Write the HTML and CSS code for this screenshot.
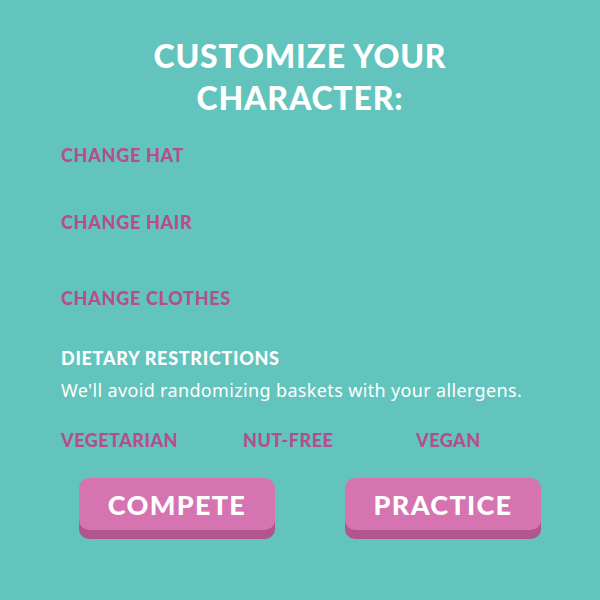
FILE: index.html
```html
<!DOCTYPE html>
<html>
<head>
<meta charset="utf-8">
<link rel="stylesheet" href="styles.css">
</head>
<body>
<main class="screen">
  <h1 class="title">CUSTOMIZE YOUR<br>CHARACTER:</h1>
  <section class="options">
    <div class="opt opt-hat">CHANGE HAT</div>
    <div class="opt opt-hair">CHANGE HAIR</div>
    <div class="opt opt-clothes">CHANGE CLOTHES</div>
  </section>
  <section class="diet">
    <h2 class="diet-title">DIETARY RESTRICTIONS</h2>
    <p class="diet-desc">We'll avoid randomizing baskets with your allergens.</p>
    <div class="diet-row">
      <span class="diet-item d1">VEGETARIAN</span>
      <span class="diet-item d2">NUT-FREE</span>
      <span class="diet-item d3">VEGAN</span>
    </div>
  </section>
  <div class="buttons">
    <button class="btn btn-compete">COMPETE</button>
    <button class="btn btn-practice">PRACTICE</button>
  </div>
</main>
</body>
</html>
```
FILE: styles.css
```css
html, body {
  margin: 0;
  padding: 0;
  background: #62c4bc;
}
.screen {
  width: 600px;
  height: 600px;
  box-sizing: border-box;
  padding-top: 35px;
  font-family: Lato, "Open Sans", sans-serif;
}
.title {
  margin: 0;
  text-align: center;
  color: #ffffff;
  font-size: 32px;
  font-weight: 900;
  line-height: 42px;
  letter-spacing: 0.8px;
}
.options {
  padding-left: 61px;
  margin-top: 25px;
}
.opt {
  color: #b44f8f;
  font-weight: 900;
  font-size: 18px;
  line-height: 22px;
  letter-spacing: 0.7px;
}
.opt-hair { margin-top: 45px; }
.opt-clothes { margin-top: 54px; }
.diet {
  padding-left: 61px;
}
.diet-title {
  margin: 38px 0 0;
  color: #ffffff;
  font-size: 18px;
  font-weight: 900;
  line-height: 22px;
  letter-spacing: 0.7px;
}
.diet-desc {
  margin: 9px 0 0;
  color: #ffffff;
  font-size: 18px;
  line-height: 24px;
  font-family: "Noto Sans", sans-serif;
  font-weight: 400;
  letter-spacing: 0.35px;
}
.diet-row {
  display: flex;
  margin-top: 27px;
}
.diet-item {
  color: #b44f8f;
  font-weight: 900;
  font-size: 18px;
  line-height: 22px;
  letter-spacing: 0.5px;
}
.d1 { width: 182px; }
.d2 { width: 173px; }
.buttons {
  display: flex;
  gap: 70px;
  padding-left: 79px;
  margin-top: 27px;
}
.btn {
  width: 196px;
  height: 61px;
  border: 0;
  border-radius: 10px;
  background: #d574b0;
  box-shadow: inset 0 -9px 0 #b15591;
  color: #ffffff;
  font-family: Lato, sans-serif;
  font-weight: 900;
  font-size: 27px;
  letter-spacing: 1.3px;
  padding: 0 0 9px;
  cursor: pointer;
}
```
